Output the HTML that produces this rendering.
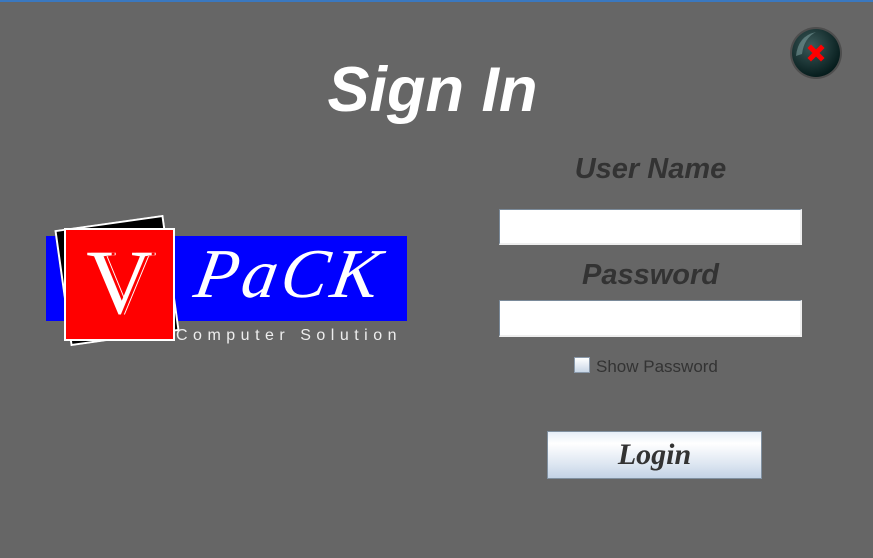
<!DOCTYPE html>
<html><head><meta charset="utf-8"><style>
*{margin:0;padding:0;box-sizing:border-box}
body{width:873px;height:558px;background:#666;position:relative;overflow:hidden;font-family:"Liberation Sans","DejaVu Sans",sans-serif}
.top{position:absolute;left:0;top:0;width:873px;height:2px;background:#3a78c0}
.abs{position:absolute}
.title{left:-4px;width:873px;top:55px;text-align:center;font-size:63px;font-weight:bold;font-style:italic;color:#fff;line-height:70px}
.lbl{font-weight:bold;font-style:italic;color:#333;font-size:29px;text-align:center;width:303px;left:499px;line-height:34px}
.inp{left:499px;width:303px;background:#fff;border:1px solid #7a8a9a;border-right:2px solid #eee;border-bottom:2px solid #eee}
.chk{left:574px;top:357px;width:16px;height:16px;border:1px solid #8a99aa;background:linear-gradient(#fff,#c8d6e6)}
.sp{left:596px;top:356px;font-size:17px;color:#333;line-height:22px}
.btn{left:547px;top:431px;width:215px;height:48px;border:1px solid #8090a0;background:linear-gradient(#e6eef8,#fff 25%,#dde6f1 70%,#c3d3e6);text-align:center;font-family:"Liberation Serif",serif;font-weight:bold;font-style:italic;font-size:30px;color:#333;line-height:46px}
</style></head><body>
<div class="top"></div>
<div class="abs title">Sign In</div>
<svg class="abs" style="left:788px;top:26px" width="56" height="56" viewBox="0 0 56 56">
<defs><radialGradient id="g" cx="0.4" cy="0.35" r="0.7"><stop offset="0" stop-color="#3c5a5a"/><stop offset="1" stop-color="#021818"/></radialGradient></defs>
<circle cx="28" cy="27" r="26" fill="#333" opacity="0.5"/>
<circle cx="28" cy="27" r="24" fill="url(#g)"/>
<path d="M8 30 Q10 10 28 6 Q16 12 14 28 Z" fill="#8aa" opacity="0.5"/>
<path d="M23 22 L33 32 M33 22 L23 32" stroke="#f00" stroke-width="5" stroke-linecap="square"/>
</svg>
<div class="abs lbl" style="top:152px">User Name</div>
<div class="abs inp" style="top:209px;height:36px"></div>
<div class="abs lbl" style="top:258px">Password</div>
<div class="abs inp" style="top:300px;height:37px"></div>
<div class="abs chk"></div>
<div class="abs sp">Show Password</div>
<div class="abs btn">Login</div>
<div class="abs" style="left:46px;top:236px;width:361px;height:85px;background:#0000ff"></div>
<div class="abs" style="left:62px;top:222px;width:110px;height:117px;background:#000;border:2px solid #fff;transform:rotate(-8deg)"></div>
<div class="abs" style="left:64px;top:228px;width:111px;height:113px;background:#f00;border:2px solid #fff"></div>
<div class="abs" style="left:64px;top:232px;width:111px;text-align:center;font-family:'Liberation Serif',serif;font-size:92px;color:#fff;line-height:100px;text-shadow:3px 0 0 #f00,4px 0 0 #fff">V</div>
<div class="abs" style="left:196px;top:236px;font-family:'Liberation Serif',serif;font-style:italic;font-size:70px;color:#fff;line-height:78px;letter-spacing:4px;transform:skewX(-10deg)">PaCK</div>
<div class="abs" style="left:176px;top:326px;font-size:16px;color:#eee;letter-spacing:5.5px;line-height:20px">Computer Solution</div>
</body></html>
